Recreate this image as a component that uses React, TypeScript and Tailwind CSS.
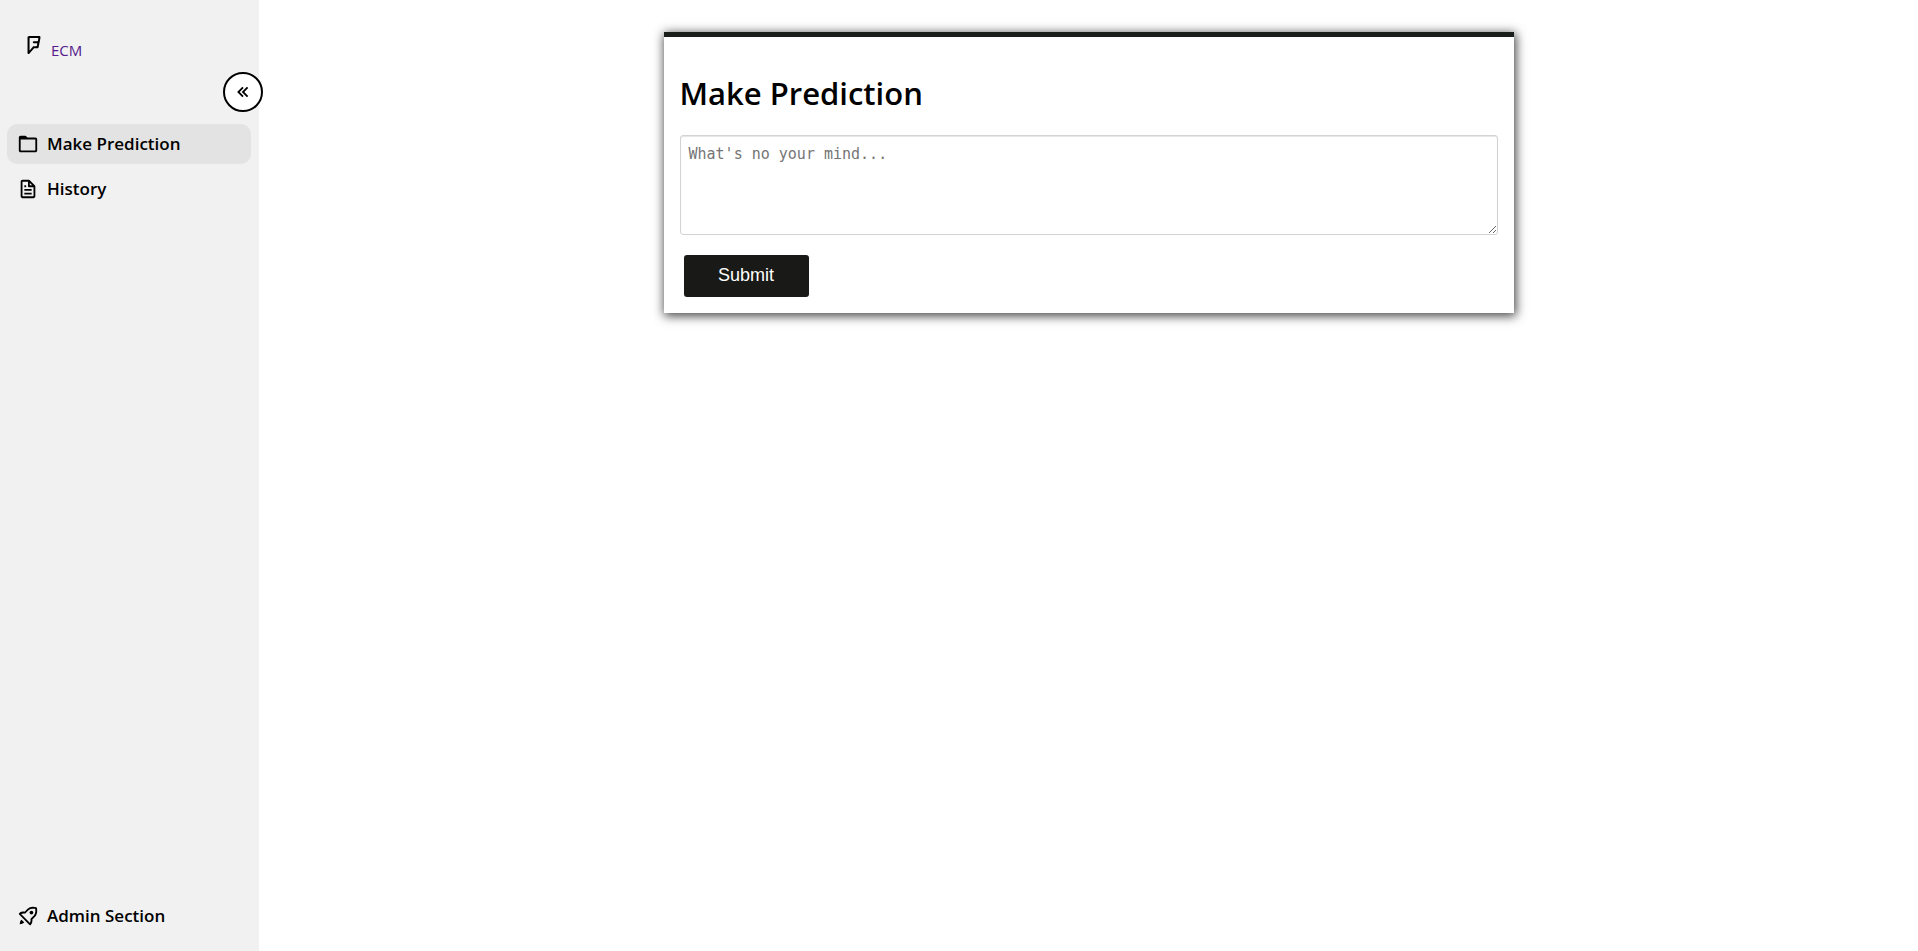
import { useState } from "react";
import type { ReactNode } from "react";
import { BiChevronsLeft, BiFile, BiFolder, BiRocket } from "react-icons/bi";
import { FaFoursquare } from "react-icons/fa6";

function NavItem({ icon, label, active = false }: { icon: ReactNode; label: string; active?: boolean }) {
  return (
    <li>
      <a
        href="#"
        aria-current={active ? "page" : undefined}
        className={
          active
            ? "flex h-10 items-center gap-2 rounded-[10px] bg-[#e3e3e3] px-2.5 text-[17px] font-semibold text-black"
            : "flex h-10 items-center gap-2 rounded-[10px] px-2.5 text-[17px] font-semibold text-black hover:bg-[#e3e3e3]"
        }
      >
        {icon}
        <span>{label}</span>
      </a>
    </li>
  );
}

export default function App() {
  const [text, setText] = useState("");

  return (
    <div className="flex min-h-screen bg-white font-['Trebuchet_MS','Open_Sans',sans-serif] text-black">
      <aside className="relative flex w-[259px] shrink-0 flex-col bg-[#f1f1f1] px-[7px] pt-9 pb-[15px]">
        <a href="#" className="ml-[18px] flex h-7 items-start gap-2 text-[#551a8b]">
          <FaFoursquare className="size-[18px] text-black" />
          <span className="pt-0.5 text-[15px] leading-6">ECM</span>
        </a>
        <button
          type="button"
          aria-label="Collapse sidebar"
          className="absolute top-[72px] -right-1 flex size-10 items-center justify-center rounded-full border-2 border-black bg-white"
        >
          <BiChevronsLeft className="size-[22px]" />
        </button>
        <nav className="flex grow flex-col justify-between pt-[60px] pr-px">
          <ul className="flex flex-col gap-[5px]">
            <NavItem active icon={<BiFolder className="size-[22px]" />} label="Make Prediction" />
            <NavItem icon={<BiFile className="size-[22px]" />} label="History" />
          </ul>
          <ul>
            <NavItem icon={<BiRocket className="size-[22px]" />} label="Admin Section" />
          </ul>
        </nav>
      </aside>
      <main className="flex grow items-start justify-center px-8 pt-8">
        <form
          onSubmit={(event) => event.preventDefault()}
          className="w-full max-w-[850px] border-t-[5px] border-[#1a1e1b] bg-white px-4 pb-4 shadow-[1px_2px_10px_1px_#444]"
        >
          <h1 className="pt-9 text-[31px] leading-10 font-semibold">
            <label htmlFor="prediction">Make Prediction</label>
          </h1>
          <textarea
            id="prediction"
            value={text}
            onChange={(event) => setText(event.target.value)}
            placeholder="What's no your mind..."
            className="mt-[22px] block h-[100px] w-full resize-y rounded-[3px] border border-[#d3d3d3] p-2 font-['Consolas','DejaVu_Sans_Mono',monospace] text-[15px] leading-5 shadow-[inset_0_1px_1px_#e5e5e5] placeholder:text-[#757575]"
          />
          <button
            type="submit"
            className="mt-5 ml-1 flex h-[42px] w-[125px] items-center justify-center rounded-[3px] bg-[#191917] pb-0.5 font-['Liberation_Sans',sans-serif] text-lg text-white"
          >
            Submit
          </button>
        </form>
      </main>
    </div>
  );
}
